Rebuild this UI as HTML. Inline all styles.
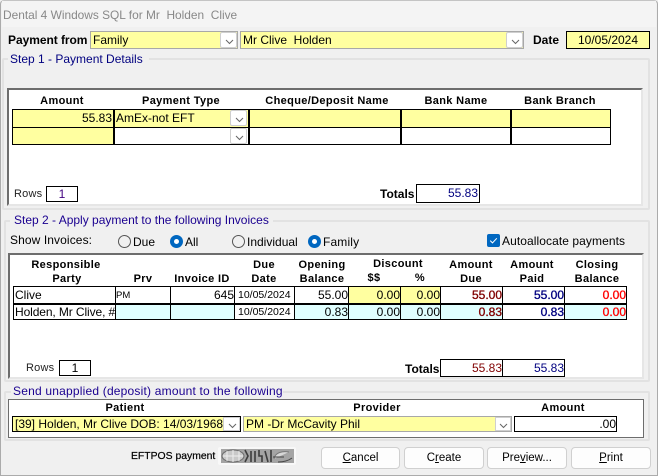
<!DOCTYPE html>
<html><head><meta charset="utf-8">
<style>
html,body{margin:0;padding:0;width:658px;height:476px;overflow:hidden;background:#f0f0f0}
body{position:relative;font:12px "Liberation Sans",Arial,sans-serif;color:#000}
div{box-sizing:border-box}
.a{position:absolute}
.t{position:absolute;white-space:pre;line-height:14px;font-size:12px}
.c{transform:translateX(-50%)}
.b{font-weight:bold}
.m{-webkit-text-stroke:.35px currentColor}
.h{font-weight:bold;font-size:11px;letter-spacing:.35px}
.nv{color:#000080}
.g{position:absolute;border:2px solid #e2e2e2;border-radius:2px}
.gt{position:absolute;background:#f0f0f0;height:10px}
.p{position:absolute;background:#fff;border-top:2px solid #6d6d6d;border-left:2px solid #6d6d6d;border-right:2px solid #e6e6e6;border-bottom:2px solid #e6e6e6}
.cell{position:absolute;border:1px solid #000;background:#fff;line-height:16px;padding:0 1px;white-space:pre;overflow:hidden}
.y{background:#ffffa0}
.cy{background:#e0ffff}
.r{text-align:right}
.combo{position:absolute;border:1px solid #a8a8a8;outline:0;background:#ffffa0;line-height:16px;padding-left:2px;white-space:pre;overflow:hidden}
.btn{position:absolute;background:#fff;border:1px solid #cfcfcf;border-radius:2px}
.btn svg{position:absolute;left:4px;top:6px}
.cmd{position:absolute;top:447px;height:22px;background:#fdfdfd;border:1px solid #d0d0d0;border-radius:4px;text-align:center;line-height:20px;font-size:11.5px}
.rad{position:absolute;width:13px;height:13px;border-radius:50%;border:1px solid #555;background:#f0f0f0}
.rad.on{background:#0067c0;border-color:#0067c0}
.rad.on:after{content:"";position:absolute;left:3px;top:3px;width:5px;height:5px;border-radius:50%;background:#fff}
.d{font-size:10.5px;padding-left:3px}
u{text-decoration:underline}
</style></head>
<body>
<div class="a" style="left:0;top:0;width:658px;height:476px;border:1px solid #ababab;border-top:1px solid #c4c4c4;border-radius:4px 4px 0 0"></div>
<div class="a" style="left:2px;top:1px;width:654px;height:26px;background:#f4f4f4"></div>
<div class="t" style="left:3px;top:8px;color:#888;font-size:11.9px">Dental 4 Windows SQL for Mr  Holden  Clive</div>

<div class="t b" style="left:8px;top:33px;letter-spacing:-.05px">Payment from</div>
<div class="combo" style="left:90px;top:31px;width:148px;height:18px">Family</div>
<div class="btn" style="left:220px;top:32px;width:17px;height:16px"><svg width="9" height="6"><path d="M1 1l3.5 3.5L8 1" fill="none" stroke="#666"/></svg></div>
<div class="combo" style="left:240px;top:31px;width:284px;height:18px">Mr Clive  Holden</div>
<div class="btn" style="left:506px;top:32px;width:17px;height:16px"><svg width="9" height="6"><path d="M1 1l3.5 3.5L8 1" fill="none" stroke="#666"/></svg></div>
<div class="t b" style="left:533px;top:33px">Date</div>
<div class="cell y" style="left:566px;top:31px;width:84px;height:18px;text-align:center">10/05/2024</div>

<!-- Step 1 -->
<div class="g" style="left:2px;top:58px;width:648px;height:152px"></div>
<div class="gt" style="left:8px;top:54px;width:141px"></div>
<div class="t nv" style="left:10px;top:52px">Step 1 - Payment Details</div>
<div class="p" style="left:7px;top:88px;width:636px;height:118px"></div>
<div class="t h c" style="left:62px;top:94px">Amount</div>
<div class="t h c" style="left:181px;top:94px">Payment Type</div>
<div class="t h c" style="left:327px;top:94px">Cheque/Deposit Name</div>
<div class="t h c" style="left:456px;top:94px">Bank Name</div>
<div class="t h c" style="left:560px;top:94px">Bank Branch</div>
<div class="cell y r" style="left:12px;top:109px;width:102px;height:19px">55.83</div>
<div class="cell y" style="left:114px;top:109px;width:135px;height:19px">AmEx-not EFT</div>
<div class="btn" style="left:230px;top:110px;width:17px;height:16px"><svg width="9" height="6"><path d="M1 1l3.5 3.5L8 1" fill="none" stroke="#666"/></svg></div>
<div class="cell y" style="left:249px;top:109px;width:152px;height:19px"></div>
<div class="cell y" style="left:401px;top:109px;width:110px;height:19px"></div>
<div class="cell y" style="left:511px;top:109px;width:100px;height:19px"></div>
<div class="cell y" style="left:12px;top:127px;width:102px;height:18px"></div>
<div class="cell" style="left:114px;top:127px;width:135px;height:18px"></div>
<div class="btn" style="left:230px;top:128px;width:17px;height:16px"><svg width="9" height="6"><path d="M1 1l3.5 3.5L8 1" fill="none" stroke="#666"/></svg></div>
<div class="cell" style="left:249px;top:127px;width:152px;height:18px"></div>
<div class="cell" style="left:401px;top:127px;width:110px;height:18px"></div>
<div class="cell" style="left:511px;top:127px;width:100px;height:18px"></div>
<div class="t" style="left:14px;top:187px;font-size:11px;letter-spacing:.2px;color:#222">Rows</div>
<div class="cell" style="left:46px;top:186px;width:32px;height:16px;line-height:14px;text-align:center;color:#400080">1</div>
<div class="t b" style="left:380px;top:187px">Totals</div>
<div class="cell r nv" style="left:416px;top:184px;width:64px;height:19px">55.83</div>

<!-- Step 2 -->
<div class="g" style="left:4px;top:220px;width:646px;height:162px"></div>
<div class="gt" style="left:10px;top:216px;width:263px"></div>
<div class="t" style="left:14px;top:213px;color:#1a0090">Step 2 - Apply payment to the following Invoices</div>
<div class="t" style="left:10px;top:233px;letter-spacing:.1px">Show Invoices:</div>
<div class="rad" style="left:118px;top:235px"></div><div class="t" style="left:133px;top:235px">Due</div>
<div class="rad on" style="left:170px;top:235px"></div><div class="t" style="left:185px;top:235px">All</div>
<div class="rad" style="left:232px;top:235px"></div><div class="t" style="left:247px;top:235px">Individual</div>
<div class="rad on" style="left:308px;top:235px"></div><div class="t" style="left:323px;top:235px;letter-spacing:.15px">Family</div>
<div class="a" style="left:487px;top:234px;width:13px;height:13px;background:#0067c0;border-radius:2px"><svg width="13" height="13" style="display:block"><path d="M3.2 6.6l2.3 2.3 4.3-4.6" fill="none" stroke="#fff" stroke-width="1"/></svg></div>
<div class="t" style="left:502px;top:234px;letter-spacing:.08px">Autoallocate payments</div>

<div class="p" style="left:8px;top:253px;width:636px;height:126px"></div>
<div class="t h c" style="left:66px;top:258px">Responsible</div>
<div class="t h c" style="left:67px;top:272px">Party</div>
<div class="t h c" style="left:143px;top:272px">Prv</div>
<div class="t h c" style="left:202px;top:272px">Invoice ID</div>
<div class="t h c" style="left:264px;top:258px">Due</div>
<div class="t h c" style="left:264px;top:272px">Date</div>
<div class="t h c" style="left:322px;top:258px">Opening</div>
<div class="t h c" style="left:322px;top:272px">Balance</div>
<div class="t h c" style="left:398px;top:257px">Discount</div>
<div class="t h c" style="left:374px;top:271px">$$</div>
<div class="t h c" style="left:420px;top:271px">%</div>
<div class="t h c" style="left:471px;top:258px">Amount</div>
<div class="t h c" style="left:471px;top:272px">Due</div>
<div class="t h c" style="left:532px;top:258px">Amount</div>
<div class="t h c" style="left:532px;top:272px">Paid</div>
<div class="t h c" style="left:597px;top:258px">Closing</div>
<div class="t h c" style="left:597px;top:272px">Balance</div>

<!-- row 1 -->
<div class="cell" style="left:13px;top:286px;width:103px;height:18px">Clive</div>
<div class="cell" style="left:115px;top:286px;width:56px;height:18px;font-size:9.5px;line-height:17px;padding-left:0">PM</div>
<div class="cell r" style="left:170px;top:286px;width:65px;height:18px;padding:0">645</div>
<div class="cell d" style="left:234px;top:286px;width:61px;height:18px">10/05/2024</div>
<div class="cell r" style="left:294px;top:286px;width:55px;height:18px;padding-right:0">55.00</div>
<div class="cell r y" style="left:348px;top:286px;width:53px;height:18px;padding-right:0">0.00</div>
<div class="cell r y" style="left:400px;top:286px;width:41px;height:18px;padding-right:0">0.00</div>
<div class="cell r m" style="left:440px;top:286px;width:63px;height:18px;padding-right:0;color:#800000">55.00</div>
<div class="cell r m nv" style="left:502px;top:286px;width:63px;height:18px;padding-right:0">55.00</div>
<div class="cell r m" style="left:564px;top:286px;width:63px;height:18px;padding-right:0;color:#f00">0.00</div>
<!-- row 2 -->
<div class="cell" style="left:13px;top:303px;width:103px;height:17px;border-top-width:2px;line-height:15px;padding:0 0 0 1px;letter-spacing:-.1px">Holden, Mr Clive, #</div>
<div class="cell cy" style="left:115px;top:303px;width:56px;height:17px;border-top-width:2px"></div>
<div class="cell cy" style="left:170px;top:303px;width:65px;height:17px;border-top-width:2px"></div>
<div class="cell d" style="left:234px;top:303px;width:61px;height:17px;border-top-width:2px;line-height:15px">10/05/2024</div>
<div class="cell r cy" style="left:294px;top:303px;width:55px;height:17px;border-top-width:2px;line-height:15px;padding-right:0">0.83</div>
<div class="cell r cy" style="left:348px;top:303px;width:53px;height:17px;border-top-width:2px;line-height:15px;padding-right:0">0.00</div>
<div class="cell r cy" style="left:400px;top:303px;width:41px;height:17px;border-top-width:2px;line-height:15px;padding-right:0">0.00</div>
<div class="cell r m cy" style="left:440px;top:303px;width:63px;height:17px;border-top-width:2px;line-height:15px;padding-right:0;color:#800000">0.83</div>
<div class="cell r m nv" style="left:502px;top:303px;width:63px;height:17px;border-top-width:2px;line-height:15px;padding-right:0">0.83</div>
<div class="cell r m cy" style="left:564px;top:303px;width:63px;height:17px;border-top-width:2px;line-height:15px;padding-right:0;color:#f00">0.00</div>

<div class="t" style="left:26px;top:361px;font-size:11px;letter-spacing:.2px;color:#222">Rows</div>
<div class="cell" style="left:59px;top:360px;width:32px;height:16px;line-height:14px;text-align:center">1</div>
<div class="t b" style="left:405px;top:362px">Totals</div>
<div class="cell r" style="left:440px;top:359px;width:63px;height:18px;padding-right:0;color:#800000">55.83</div>
<div class="cell r nv" style="left:502px;top:359px;width:63px;height:18px;padding-right:0">55.83</div>

<!-- Send -->
<div class="g" style="left:4px;top:391px;width:646px;height:50px"></div>
<div class="gt" style="left:11px;top:387px;width:272px"></div>
<div class="t" style="left:13px;top:384px;color:#1a0090;letter-spacing:.2px">Send unapplied (deposit) amount to the following</div>
<div class="a" style="left:8px;top:399px;width:636px;height:39px;background:#fff;border:1px solid #6d6d6d"></div>
<div class="t h c" style="left:125px;top:401px">Patient</div>
<div class="t h c" style="left:377px;top:401px">Provider</div>
<div class="t h c" style="left:563px;top:401px">Amount</div>
<div class="cell y" style="left:12px;top:416px;width:229px;height:16px;line-height:14px;padding-left:2px">[39] Holden, Mr Clive DOB: 14/03/1968</div>
<div class="btn" style="left:223px;top:417px;width:17px;height:14px;border-radius:0"><svg width="9" height="6" style="top:5px"><path d="M1 1l3.5 3.5L8 1" fill="none" stroke="#666"/></svg></div>
<div class="combo" style="left:243px;top:416px;width:269px;height:16px;line-height:14px">PM -Dr McCavity Phil</div>
<div class="btn" style="left:495px;top:417px;width:16px;height:14px;border-radius:0"><svg width="9" height="6" style="top:5px;left:3px"><path d="M1 1l3.5 3.5L8 1" fill="none" stroke="#666"/></svg></div>
<div class="cell r" style="left:514px;top:416px;width:103px;height:16px;line-height:14px;padding-right:0">.00</div>

<!-- Bottom -->
<div class="t" style="left:131px;top:450px;font-size:10.4px;-webkit-text-stroke:.2px #000">EFTPOS payment</div>
<div class="a" style="left:218px;top:447px;width:78px;height:18px;background:#f8f8f8;border-radius:2px">
<svg width="78" height="18" style="display:block"><rect x="3" y="2" width="73" height="14" fill="#a4a4a4"/><ellipse cx="15" cy="9" rx="11" ry="6" fill="#c8c8c8" stroke="#6a6a6a"/><path d="M5 9h20M15 3v12M9 4v10M21 4v10" stroke="#eee"/><path d="M27 3l3 6-3 6M33 4v11M37 4v11M41 3v6h3v6M47 4l3 11M53 3v12" fill="none" stroke="#3c3c3c" stroke-width="1.6"/><path d="M56 12c1-7 9-8 15-7" fill="#d8d8d8" stroke="#777"/><path d="M55 10h11M60 15c5 0 10-1 14-4" fill="none" stroke="#444"/></svg></div>
<div class="cmd" style="left:321px;width:79px"><u>C</u>ancel</div>
<div class="cmd" style="left:404px;width:80px">C<u>r</u>eate</div>
<div class="cmd" style="left:487px;width:80px">Pre<u>v</u>iew...</div>
<div class="cmd" style="left:571px;width:80px"><u>P</u>rint</div>
</body></html>
